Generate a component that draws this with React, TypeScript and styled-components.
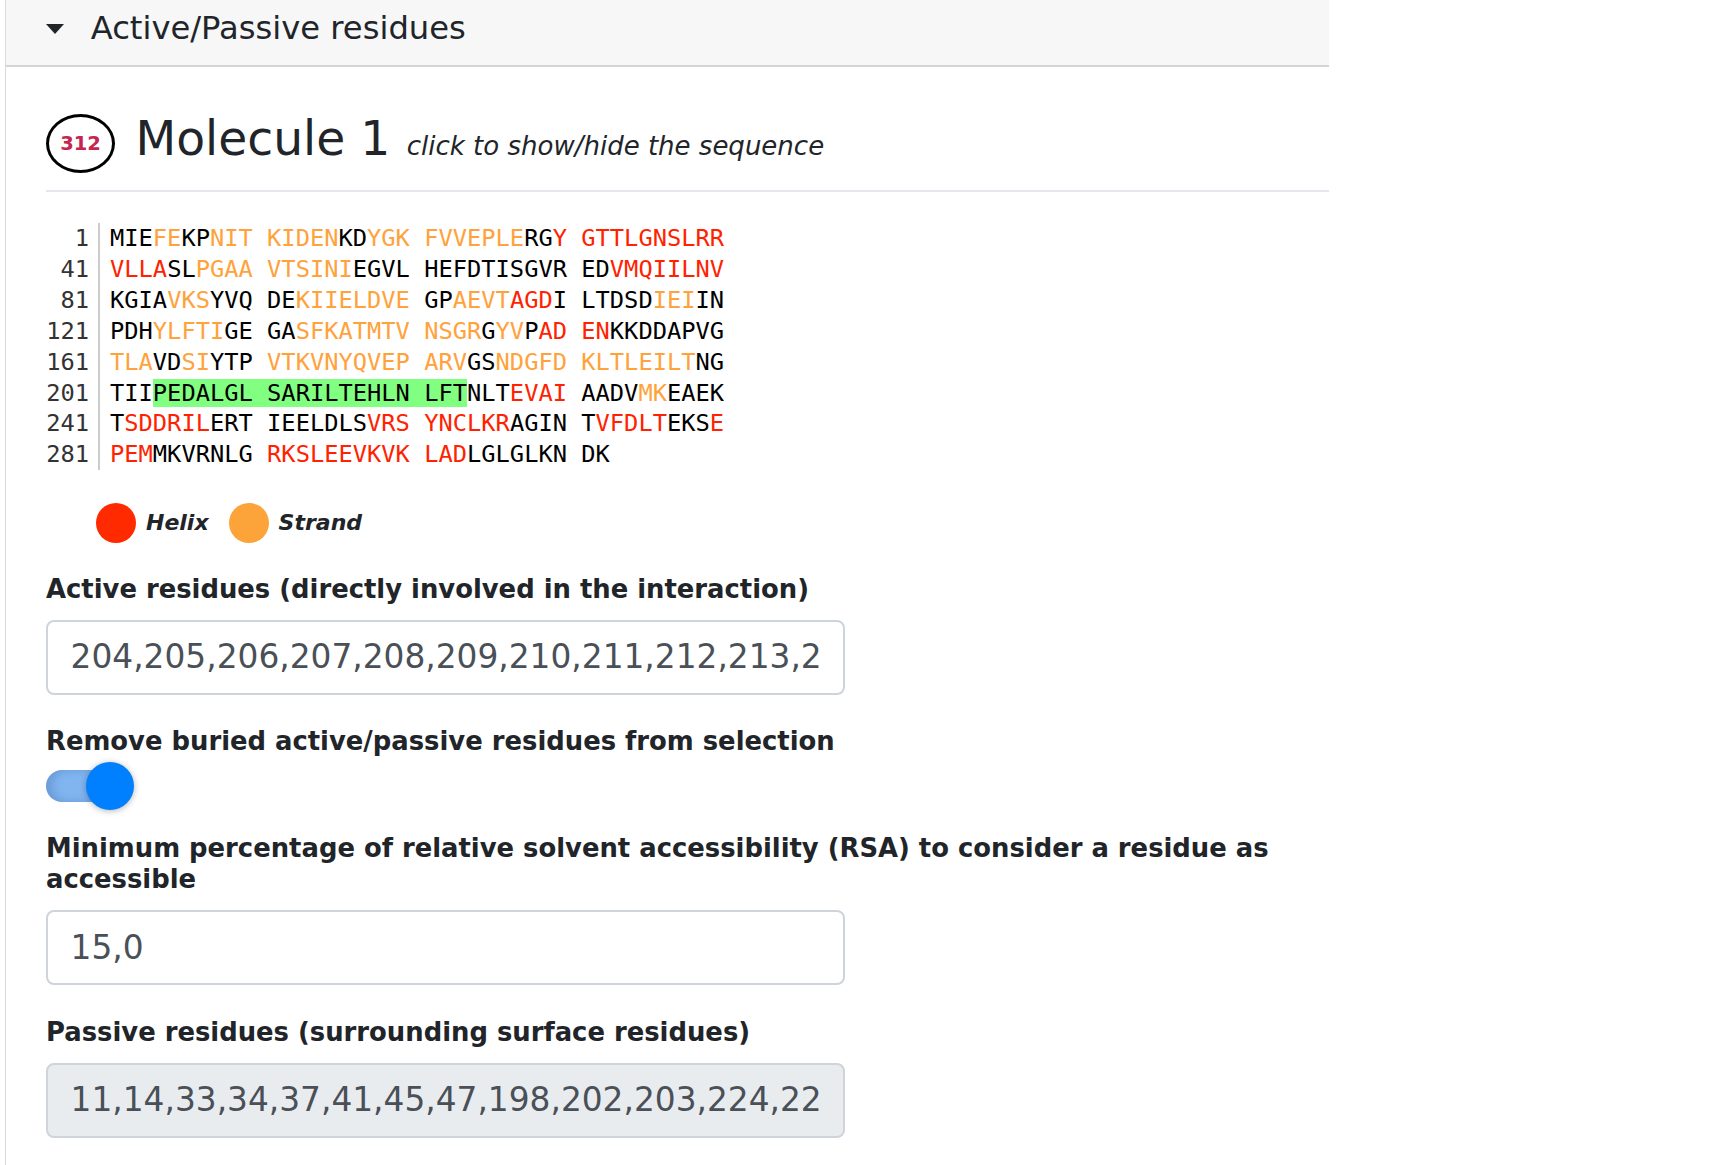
import React from "react";
import styled, { createGlobalStyle } from "styled-components";

const GlobalStyle = createGlobalStyle`
  html, body { margin: 0; padding: 0; background: #ffffff; }
  body {
    font-family: "DejaVu Sans", Verdana, sans-serif;
    color: #212529;
  }
  * { box-sizing: border-box; }
`;

const Panel = styled.section`
  margin-left: 5px;
  width: 1324px;
  min-height: 1165px;
  border-left: 1px solid #dadada;
`;

const PanelHeader = styled.div`
  display: flex;
  align-items: center;
  gap: 26.7px;
  padding: 9.4px 0 16.6px 40px;
  background: #f7f7f7;
  border-bottom: 2px solid #d4d4d4;
`;

const Caret = styled.span`
  width: 0;
  height: 0;
  border-left: 9.5px solid transparent;
  border-right: 9.5px solid transparent;
  border-top: 10px solid #212529;
`;

const HeaderTitle = styled.h3`
  margin: 0;
  font-size: 32.2px;
  line-height: 39px;
  font-weight: 400;
  color: #212529;
`;

const PanelBody = styled.div`
  padding: 0 0 40px 40px;
`;

const MoleculeHeading = styled.div`
  display: flex;
  align-items: flex-start;
  margin-top: 42.6px;
  padding-bottom: 14.9px;
  border-bottom: 2px solid #e4e7eb;
`;

const CountBadge = styled.div`
  width: 69px;
  height: 59px;
  margin-top: 4.4px;
  border: 3px solid #000;
  border-radius: 50%;
  display: flex;
  align-items: center;
  justify-content: center;
  color: #c7254e;
  font-weight: 700;
  font-size: 19.5px;
  flex-shrink: 0;
`;

const MoleculeTitle = styled.h2`
  margin: 0 0 0 20.5px;
  font-size: 47.2px;
  line-height: 57.6px;
  font-weight: 400;
  color: #212529;
  cursor: pointer;
`;

const Hint = styled.small`
  font-size: 26px;
  font-style: italic;
  font-weight: 400;
  margin-left: 1.5px;
`;

const Sequence = styled.div`
  display: flex;
  margin-top: 31px;
  font-family: "DejaVu Sans Mono", "Liberation Mono", monospace;
  font-size: 23.73px;
  line-height: 30.9px;
`;

const NumberCol = styled.div`
  width: 43px;
  text-align: right;
  color: #333;
`;

const SeqCol = styled.div`
  margin-left: 9px;
  padding-left: 10px;
  border-left: 2px solid #cccccc;
  color: #000;
`;

const SeqRow = styled.div`
  white-space: pre;
  height: 30.9px;
`;

const colorMap: Record<string, string> = {
  k: "#000000",
  o: "#ffa23c",
  r: "#ff2200",
  g: "#000000",
};

const Residues = styled.span<{ $c: string }>`
  color: ${(p) => colorMap[p.$c]};
  background: ${(p) => (p.$c === "g" ? "#80ff80" : "transparent")};
`;

const Legend = styled.div`
  display: flex;
  align-items: center;
  margin-top: 32.4px;
  padding-left: 50px;
`;

const LegendItem = styled.div`
  display: flex;
  align-items: center;
  gap: 10px;
  margin-right: 20px;
`;

const Dot = styled.span<{ $color: string }>`
  width: 40px;
  height: 40px;
  border-radius: 50%;
  background: ${(p) => p.$color};
`;

const LegendLabel = styled.span`
  font-size: 22px;
  font-weight: 700;
  font-style: italic;
  color: #212529;
`;

const Field = styled.div<{ $top: number }>`
  margin-top: ${(p) => p.$top}px;
`;

const Label = styled.label`
  display: block;
  font-size: 25.85px;
  line-height: 31.2px;
  font-weight: 700;
  color: #212529;
  margin-bottom: 14.6px;
`;

const TextInput = styled.input<{ $muted?: boolean }>`
  display: block;
  width: 799px;
  height: 75px;
  padding: 0 21px 0 22.6px;
  border: 2px solid #ced4da;
  border-radius: 8px;
  font-family: "DejaVu Sans", Verdana, sans-serif;
  font-size: 32.8px;
  color: #495057;
  background: ${(p) => (p.$muted ? "#e9ecef" : "#ffffff")};
  outline: none;
`;

const SwitchWrap = styled.div`
  position: relative;
  height: 44.5px;
  margin-top: -14.6px;
  padding-top: 13px;
`;

const SwitchTrack = styled.div`
  width: 72px;
  height: 32px;
  border-radius: 16px;
  background: #80b5f0;
  box-shadow: inset 6px 0 8px rgba(40, 80, 140, 0.25);
`;

const SwitchKnob = styled.div`
  position: absolute;
  left: 40px;
  top: 5px;
  width: 48px;
  height: 48px;
  border-radius: 50%;
  background: #0080ff;
  box-shadow: 0 1px 6px rgba(0, 0, 0, 0.3);
`;

const rows: [number, string][] = [
  [1, "kMIEoFEkKPoNIT KIDENkKDoYGK FVVEPLEkRGrY GTTLGNSLRR"],
  [41, "rVLLAkSLoPGAA VTSINIkEGVL HEFDTISGVR EDrVMQIILNV"],
  [81, "kKGIAoVKSkYVQ DEoKIIELDVE kGPoAEVTrAGDkI LTDSDoIEIkIN"],
  [121, "kPDHoYLFTIkGE GAoSFKATMTV NSGRkGoYVkPrAD ENkKKDDAPVG"],
  [161, "oTLAkVDoSIkYTP oVTKVNYQVEP ARVkGSoNDGFD KLTLEILTkNG"],
  [201, "kTIIgPEDALGL SARILTEHLN LFTkNLTrEVAI kAADVoMKkEAEK"],
  [241, "kTrSDDRILkERT IEELDLSrVRS YNCLKRkAGIN TrVFDLTkEKSrE"],
  [281, "rPEMkMKVRNLG rRKSLEEVKVK LADkLGLGLKN DK"],
];

function parseRow(markup: string): { c: string; t: string }[] {
  const segs: { c: string; t: string }[] = [];
  let color = "k";
  for (const ch of markup) {
    if (ch >= "a" && ch <= "z") {
      color = ch;
      segs.push({ c: color, t: "" });
    } else {
      if (segs.length === 0) segs.push({ c: color, t: "" });
      segs[segs.length - 1].t += ch;
    }
  }
  return segs.filter((s) => s.t.length > 0);
}

export default function App() {
  return (
    <>
      <GlobalStyle />
      <Panel>
        <PanelHeader>
          <Caret />
          <HeaderTitle>Active/Passive residues</HeaderTitle>
        </PanelHeader>
        <PanelBody>
          <MoleculeHeading>
            <CountBadge>312</CountBadge>
            <MoleculeTitle>
              Molecule 1 <Hint>click to show/hide the sequence</Hint>
            </MoleculeTitle>
          </MoleculeHeading>

          <Sequence>
            <NumberCol>
              {rows.map(([n]) => (
                <SeqRow key={n}>{n}</SeqRow>
              ))}
            </NumberCol>
            <SeqCol>
              {rows.map(([n, m]) => (
                <SeqRow key={n}>
                  {parseRow(m).map((s, i) => (
                    <Residues key={i} $c={s.c}>
                      {s.t}
                    </Residues>
                  ))}
                </SeqRow>
              ))}
            </SeqCol>
          </Sequence>

          <Legend>
            <LegendItem>
              <Dot $color="#ff2a00" />
              <LegendLabel>Helix</LegendLabel>
            </LegendItem>
            <LegendItem>
              <Dot $color="#fca33a" />
              <LegendLabel>Strand</LegendLabel>
            </LegendItem>
          </Legend>

          <Field $top={31.4}>
            <Label>Active residues (directly involved in the interaction)</Label>
            <TextInput
              type="text"
              defaultValue="204,205,206,207,208,209,210,211,212,213,214,215,216,217,218,219,220,221,222,223,224"
            />
          </Field>

          <Field $top={31}>
            <Label>Remove buried active/passive residues from selection</Label>
            <SwitchWrap>
              <SwitchTrack />
              <SwitchKnob />
            </SwitchWrap>
          </Field>

          <Field $top={31.7}>
            <Label>
              Minimum percentage of relative solvent accessibility (RSA) to consider a residue as accessible
            </Label>
            <TextInput type="text" defaultValue="15,0" />
          </Field>

          <Field $top={32}>
            <Label>Passive residues (surrounding surface residues)</Label>
            <TextInput
              type="text"
              $muted
              readOnly
              defaultValue="11,14,33,34,37,41,45,47,198,202,203,224,226,228,231"
            />
          </Field>
        </PanelBody>
      </Panel>
    </>
  );
}
